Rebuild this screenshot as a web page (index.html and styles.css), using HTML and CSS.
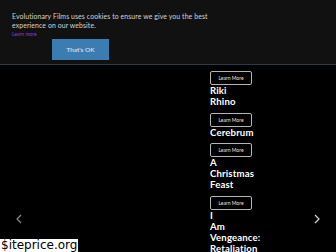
FILE: index.html
```html
<!DOCTYPE html>
<html>
<head>
<meta charset="utf-8">
<link rel="stylesheet" href="styles.css">
</head>
<body>
<div class="cookie">
  <p class="cookie-text">Evolutionary Films uses cookies to ensure we give you the best experience on our website.</p>
  <a class="cookie-link" href="#">Learn more</a>
  <button class="cookie-btn">That's OK</button>
</div>
<main class="slider">
  <button class="arrow arrow-left" aria-label="Previous">
    <svg width="6" height="10" viewBox="0 0 6 10"><path d="M5 1 L1 5 L5 9" fill="none" stroke="#8a8a8a" stroke-width="1.2"/></svg>
  </button>
  <div class="list">
    <div class="item"><a class="more" href="#">Learn More</a><h2 class="title">Riki Rhino</h2></div>
    <div class="item"><a class="more" href="#">Learn More</a><h2 class="title">Cerebrum</h2></div>
    <div class="item"><a class="more" href="#">Learn More</a><h2 class="title">A Christmas Feast</h2></div>
    <div class="item"><a class="more" href="#">Learn More</a><h2 class="title">I Am Vengeance: Retaliation</h2></div>
  </div>
  <button class="arrow arrow-right" aria-label="Next">
    <svg width="6" height="10" viewBox="0 0 6 10"><path d="M1 1 L5 5 L1 9" fill="none" stroke="#d8d8d8" stroke-width="1.2"/></svg>
  </button>
</main>
<div class="watermark">$iteprice.org</div>
</body>
</html>
```
FILE: styles.css
```css
html, body {
  margin: 0;
  padding: 0;
  background: #000;
  height: 252px;
  overflow: hidden;
}
body {
  font-family: Lato, "Open Sans", sans-serif;
  position: relative;
}
.cookie {
  background: #111111;
  height: 65px;
  border-bottom: 1px solid #2c3b4c;
  padding: 12px 0 0 12px;
  box-sizing: border-box;
  display: flex;
  flex-direction: column;
  align-items: flex-start;
}
.cookie-text {
  margin: 0;
  width: 215px;
  color: #d4d4d4;
  font-size: 6.9px;
  line-height: 9px;
  letter-spacing: 0.1px;
}
.cookie-link {
  color: #8b3fd0;
  font-size: 5px;
  line-height: 8px;
  text-decoration: none;
}
.cookie-btn {
  margin: 1px 0 0 40px;
  width: 57px;
  height: 21px;
  border: none;
  background: #3b7db1;
  color: #e8eef4;
  font-family: inherit;
  font-size: 6.5px;
  padding: 0;
}
.slider {
  display: flex;
  padding-top: 6px;
  position: relative;
  height: 186px;
}
.list {
  margin-left: 210px;
  display: flex;
  flex-direction: column;
}
.item {
  margin-bottom: 5.5px;
}
.more {
  display: flex;
  align-items: center;
  justify-content: center;
  width: 42px;
  height: 14px;
  box-sizing: border-box;
  border: 1px solid #b5b5b5;
  border-radius: 2px;
  color: #e6e6e6;
  font-size: 5px;
  text-decoration: none;
}
.title {
  margin: 0;
  width: 0;
  color: #fff;
  font-size: 9.6px;
  font-weight: 700;
  line-height: 11px;
  letter-spacing: 0.15px;
  white-space: normal;
}
.arrow {
  position: absolute;
  top: 149px;
  background: none;
  border: none;
  padding: 0;
  width: 6px;
  height: 10px;
  line-height: 0;
}
.arrow-left { left: 16px; }
.arrow-right { left: 314px; }
.watermark {
  position: absolute;
  left: 0;
  top: 239px;
  background: #fff;
  color: #000;
  font-family: "DejaVu Sans", Verdana, sans-serif;
  font-size: 12px;
  line-height: 13px;
  padding: 0 1px;
}
```
